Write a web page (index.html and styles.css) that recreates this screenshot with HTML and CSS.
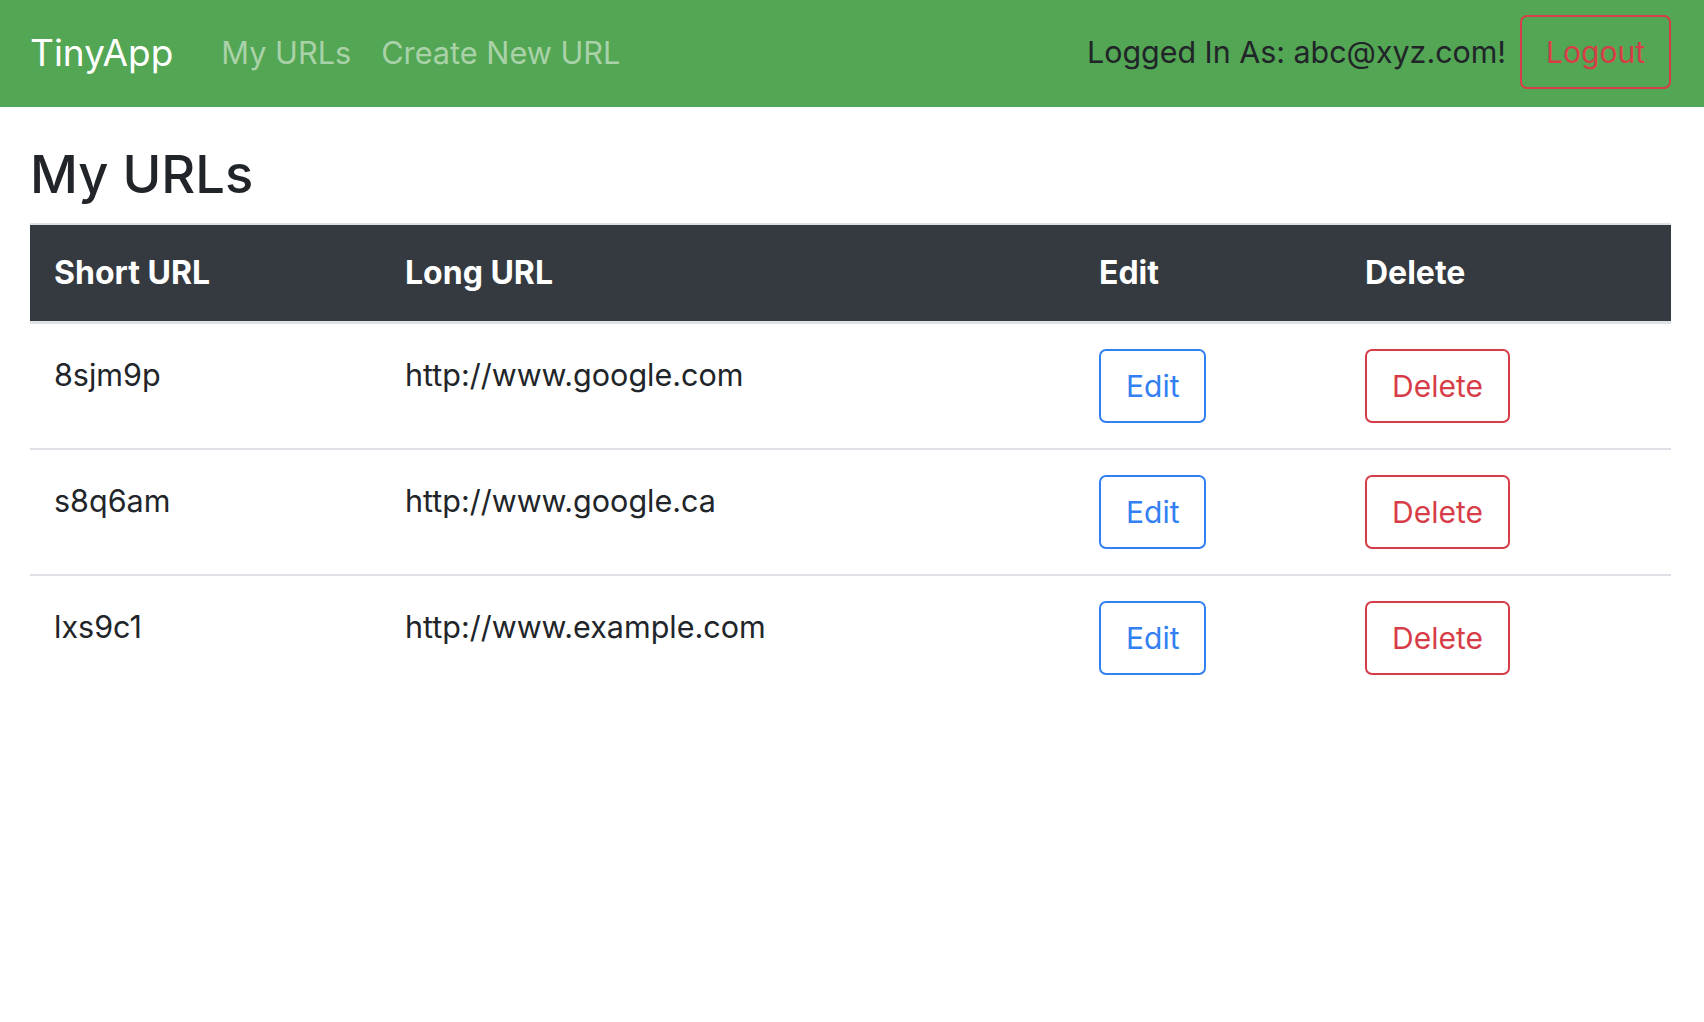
FILE: index.html
```html
<!DOCTYPE html>
<html lang="en">
<head>
<meta charset="utf-8">
<title>TinyApp</title>
<link rel="stylesheet" href="styles.css">
</head>
<body>
<nav class="navbar">
  <div class="nav-left">
    <a class="brand" href="#">TinyApp</a>
    <a class="nav-link" href="#">My URLs</a>
    <a class="nav-link" href="#">Create New URL</a>
  </div>
  <div class="nav-right">
    <span class="login-text">Logged In As: abc@xyz.com!</span>
    <button class="btn btn-danger">Logout</button>
  </div>
</nav>
<main class="content">
  <h1 class="title">My URLs</h1>
  <table class="url-table">
    <colgroup>
      <col class="c1"><col class="c2"><col class="c3"><col class="c4">
    </colgroup>
    <thead>
      <tr><th>Short URL</th><th>Long URL</th><th>Edit</th><th>Delete</th></tr>
    </thead>
    <tbody>
      <tr>
        <td class="txt">8sjm9p</td><td class="txt">http://www.google.com</td>
        <td><button class="btn btn-primary">Edit</button></td>
        <td><button class="btn btn-danger">Delete</button></td>
      </tr>
      <tr>
        <td class="txt">s8q6am</td><td class="txt">http://www.google.ca</td>
        <td><button class="btn btn-primary">Edit</button></td>
        <td><button class="btn btn-danger">Delete</button></td>
      </tr>
      <tr>
        <td class="txt">lxs9c1</td><td class="txt">http://www.example.com</td>
        <td><button class="btn btn-primary">Edit</button></td>
        <td><button class="btn btn-danger">Delete</button></td>
      </tr>
    </tbody>
  </table>
</main>
</body>
</html>
```
FILE: styles.css
```css
* { box-sizing: border-box; }
html, body { margin: 0; padding: 0; background: #fff; }
body {
  font-family: Inter, "Noto Sans", "Liberation Sans", sans-serif;
  color: #212529;
  font-size: 30px;
  line-height: 45px;
}
.navbar {
  display: flex;
  align-items: center;
  justify-content: space-between;
  height: 107px;
  padding: 15px 33px 18px 30px;
  background: #53a653;
}
.nav-left, .nav-right { display: flex; align-items: center; }
.brand {
  color: #fff;
  text-decoration: none;
  font-size: 37px;
  margin-right: 33px;
}
.nav-link {
  color: rgba(255,255,255,0.5);
  text-decoration: none;
  padding: 0 15px;
  font-size: 30.7px;
}
.login-text { color: #212529; margin-right: 14px; font-size: 30.4px; }
.btn {
  font-family: inherit;
  font-size: 30px;
  line-height: 46px;
  padding: 12px 24px;
  border: 2px solid;
  border-radius: 7px;
  background: transparent;
  cursor: pointer;
}
.url-table .btn { padding: 12px 25px; }
.btn-danger { color: #d73d48; border-color: #d73d48; }
.btn-primary { color: #3380f2; border-color: #3380f2; }
.content { padding: 0 33px 0 30px; }
.title {
  font-size: 52.5px;
  font-weight: 500;
  line-height: 65px;
  margin: 35px 0 16px;
}
.url-table {
  width: 100%;
  border-collapse: collapse;
  table-layout: fixed;
}
.c1 { width: 351px; }
.c2 { width: 694px; }
.c3 { width: 266px; }
.url-table th {
  background: #343a40;
  color: #fff;
  font-size: 32px;
  font-weight: 700;
  text-align: left;
  padding: 25px 24px 26px;
  border-top: 2px solid #dee2e6;
  border-bottom: 3px solid #dee2e6;
}
.url-table td {
  padding: 25px 24px;
  vertical-align: top;
  border-top: 2px solid #dee2e6;
}
.url-table td.txt { padding-top: 28px; font-size: 30.5px; }
.url-table tbody tr:first-child td { border-top: 0; }
```
